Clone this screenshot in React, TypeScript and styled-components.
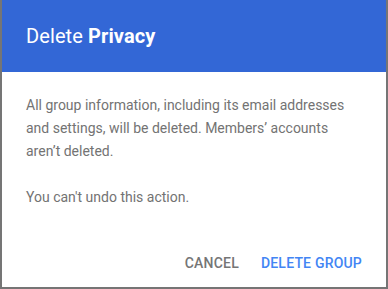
import styled, { createGlobalStyle } from "styled-components";

const GlobalStyle = createGlobalStyle`
  html, body {
    margin: 0;
    padding: 0;
    background: #757575;
  }

  body {
    font-family: Roboto, "Liberation Sans", Arial, sans-serif;
  }
`;

const App: React.FC = () => {
  return (
    <>
      <GlobalStyle />
      <Backdrop>
        <StyledDialog>
          <Header>
            <h2 className="title">
              Delete <b>Privacy</b>
            </h2>
          </Header>
          <Body>
            <p className="text">
              All group information, including its email addresses and
              settings, will be deleted. Members’ accounts aren’t deleted.
            </p>
            <p className="text">You can't undo this action.</p>
          </Body>
          <Actions>
            <ActionButton>Cancel</ActionButton>
            <ActionButton $primary>Delete group</ActionButton>
          </Actions>
        </StyledDialog>
      </Backdrop>
    </>
  );
};

const Backdrop = styled.div`
  width: 388px;
  height: 289px;
  padding: 0 2px 2px 2px;
  box-sizing: border-box;
  overflow: hidden;
`;

const StyledDialog = styled.div`
  display: flex;
  flex-direction: column;
  height: 100%;
  background-color: #ffffff;
`;

const Header = styled.div`
  display: flex;
  align-items: center;
  height: 72px;
  padding: 0 24px;
  box-sizing: border-box;
  background-color: #3367d6;

  .title {
    margin: 0;
    font-size: 20px;
    font-weight: 400;
    color: #ffffff;
    letter-spacing: 0.1px;
  }

  .title b {
    font-weight: 700;
  }
`;

const Body = styled.div`
  flex: 1;
  padding: 22px 24px 0 24px;

  .text {
    margin: 0 0 23px 0;
    font-size: 14px;
    line-height: 23px;
    color: #737373;
  }
`;

const Actions = styled.div`
  display: flex;
  justify-content: flex-end;
  align-items: center;
  gap: 6px;
  padding: 0 16px 8px 16px;
`;

const ActionButton = styled.button<{ $primary?: boolean }>`
  font-family: Roboto, "Liberation Sans", Arial, sans-serif;
  font-size: 14px;
  font-weight: 500;
  text-transform: uppercase;
  letter-spacing: 0.2px;
  color: ${(props) => (props.$primary ? "#4285f4" : "#757575")};

  padding: 8px 8px;
  border: none;
  background: transparent;
  cursor: pointer;
`;

export default App;
